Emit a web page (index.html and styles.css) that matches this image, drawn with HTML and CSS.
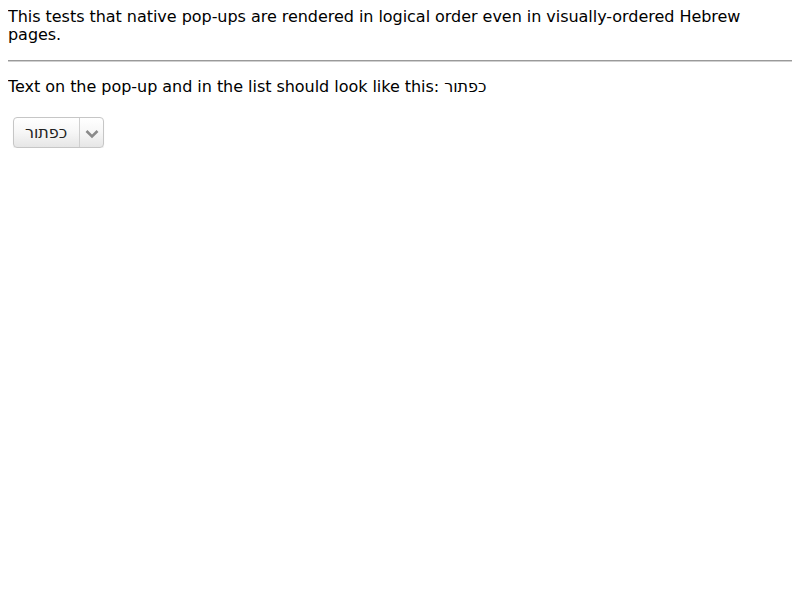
FILE: index.html
```html
<!DOCTYPE html>
<html>
<head>
<meta charset="utf-8">
<link rel="stylesheet" href="styles.css">
</head>
<body>
<div class="intro">This tests that native pop-ups are rendered in logical order even in visually-ordered Hebrew pages.</div>
<hr class="rule">
<p class="expect">Text on the pop-up and in the list should look like this: <span class="heb">כפתור</span></p>
<div class="popup">
  <span class="popup-label"><span class="heb">כפתור</span></span>
  <span class="popup-arrow">
    <svg width="14" height="10" viewBox="0 0 14 10"><path d="M1.5 2 L7 7.5 L12.5 2" fill="none" stroke="#8a8a8a" stroke-width="2.6"/></svg>
  </span>
</div>
</body>
</html>
```
FILE: styles.css
```css
body {
  margin: 8px;
  font-family: "DejaVu Sans", sans-serif;
  font-size: 16px;
  line-height: 18px;
  letter-spacing: -0.04px;
  color: #000;
  background: #fff;
}
.intro {
  margin: 0 0 16px 0;
}
.rule {
  margin: 0;
  border: none;
  border-top: 1px solid #9a9a9a;
  border-bottom: 1px solid #d0d0d0;
  height: 0;
}
.expect {
  margin: 16px 0 21px 0;
}
.heb {
  direction: rtl;
  unicode-bidi: isolate;
}
.popup {
  display: inline-flex;
  margin-left: 5px;
  height: 29px;
  border: 1px solid #c6c6c6;
  border-radius: 4px;
  background: linear-gradient(#ffffff, #f6f6f6 50%, #e6e6e6);
  box-shadow: 0 1px 1px rgba(0,0,0,0.08);
  box-sizing: content-box;
}
.popup-label {
  display: flex;
  align-items: center;
  justify-content: flex-start;
  padding: 0 10px 0 11px;
  width: 44px;
  font-size: 16px;
  color: #222;
  border-right: 1px solid #cfcfcf;
}
.popup-arrow {
  display: flex;
  align-items: center;
  justify-content: center;
  width: 23px;
  padding-top: 3px;
}
```
